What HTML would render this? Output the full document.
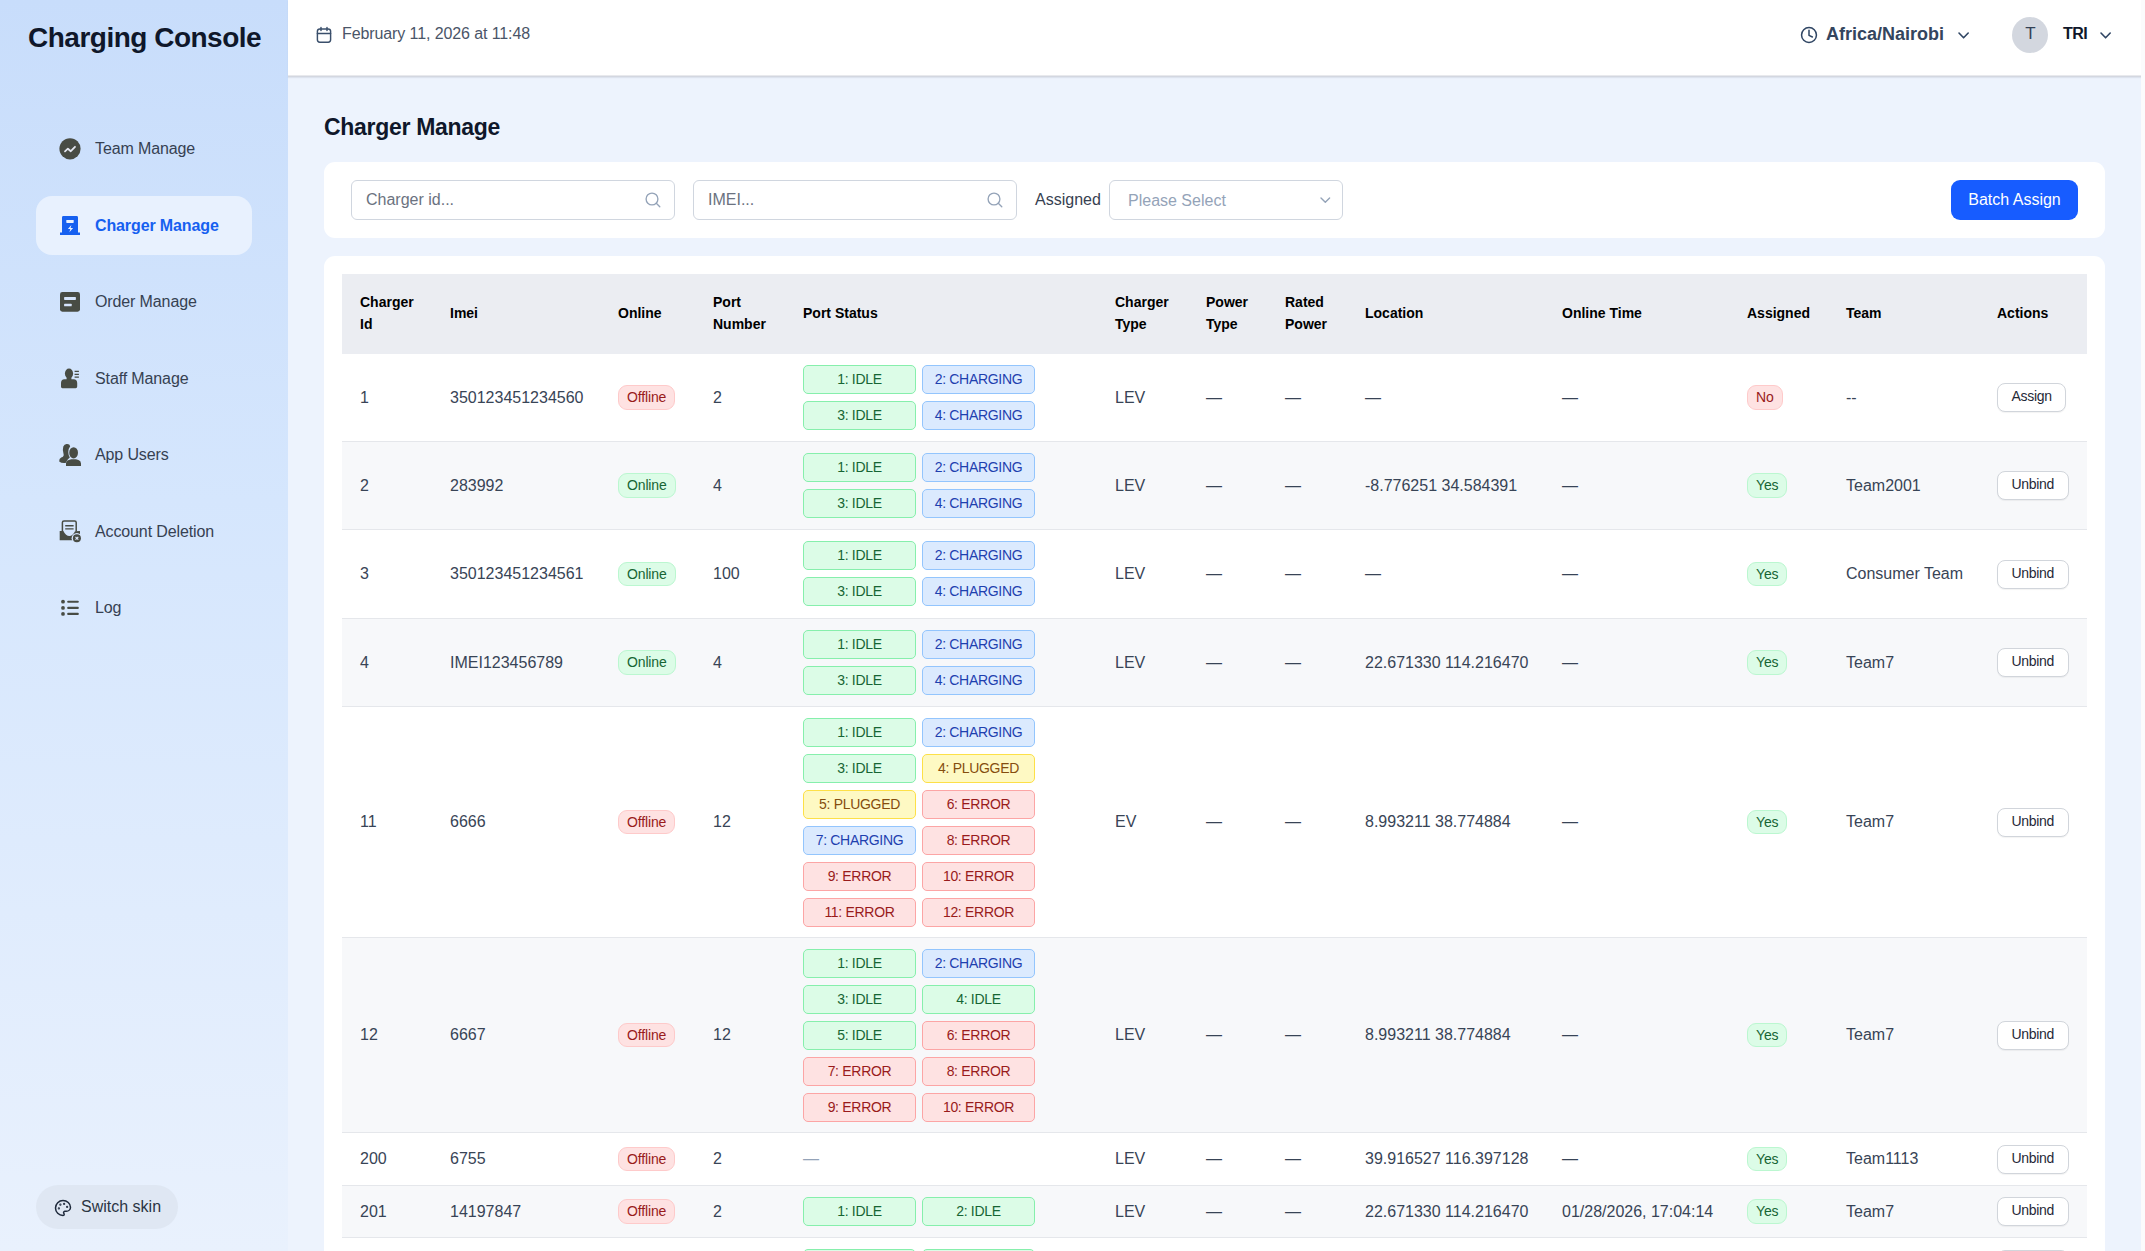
<!DOCTYPE html><html><head><meta charset="utf-8"><style>*{box-sizing:border-box;margin:0;padding:0}
html,body{width:2145px;height:1251px;overflow:hidden}
body{font-family:"Liberation Sans",sans-serif;background:#edf3fd;position:relative;color:#334155}
#sb{position:absolute;left:0;top:0;width:288px;height:1251px;background:linear-gradient(180deg,#c8ddfb 0%,#d5e6fd 40%,#e9f1fd 100%)}
#logo{position:absolute;z-index:1;left:28px;top:21px;font-size:28px;font-weight:700;letter-spacing:-0.5px;color:#0f172a;line-height:34px;white-space:nowrap}
.nav{position:absolute;left:36px;width:216px;height:59px;border-radius:16px}
.nav .ic{position:absolute;left:22px;top:17px;width:24px;height:24px}
.nav .ic svg{display:block}
.nav .tx{position:absolute;left:59px;top:0;line-height:59px;font-size:16px;color:#364152;white-space:nowrap;letter-spacing:-0.12px}
.nav.act{background:#e8f1fe}
.nav.act .tx{color:#1660f0;font-weight:700}
#skin{position:absolute;left:36px;top:1185px;width:142px;height:44px;border-radius:22px;background:#dfe7f3}
#skin .sic{position:absolute;left:19px;top:14px}
#skin .sic svg{display:block}
#skin .tx{position:absolute;left:45px;top:0;line-height:44px;font-size:16px;color:#2b3544}
#hdr{position:absolute;left:288px;top:0;width:1853px;height:77px;background:#fff;border-bottom:1px solid #d3d7e0;box-shadow:inset 0 -1px 0 #e8e9ed,0 1px 1px rgba(15,23,42,0.07)}
#sbar{position:absolute;left:2141px;top:0;width:4px;height:1251px;background:#fbfbfc}
.abs{position:absolute;white-space:nowrap}
.abs svg{display:block}
.pa{position:absolute;display:block;overflow:visible}
#date{left:342px;top:24px;font-size:16px;color:#4a5568;line-height:20px;letter-spacing:-0.1px}
#tz{left:1826px;top:23px;font-size:18px;font-weight:700;color:#34455e;line-height:22px}
#avatar{left:2012px;top:17px;width:36px;height:36px;border-radius:50%;background:#d3d7df;color:#334155;font-size:17px;text-align:center;line-height:34px;text-indent:1px}
#user{left:2063px;top:24px;font-size:16px;font-weight:700;color:#0f172a;line-height:20px;letter-spacing:-0.5px}
#title{left:324px;top:111.8px;font-size:23px;letter-spacing:-0.3px;font-weight:700;color:#0f172a;line-height:30px}
#fcard{position:absolute;left:324px;top:162px;width:1781px;height:76px;background:#fff;border-radius:11px}
.inp{position:absolute;top:180px;height:40px;border:1px solid #d0d6df;border-radius:6px;background:#fff}
.inp .ph{position:absolute;left:14px;top:0;line-height:38px;font-size:16px;color:#6b7280}
.inp .ph.sel{color:#94a3b8;left:18px;top:1px}
.inp .si{position:absolute;right:12px;top:10px}
.inp .si svg,.inp .chv svg{display:block}
.inp .chv{position:absolute;right:11px;top:12px}
#asl{left:1035px;top:190px;font-size:16px;color:#374151;line-height:20px}
#batch{left:1951px;top:180px;width:127px;height:40px;border-radius:9px;background:#175cff;color:#fff;font-size:16px;text-align:center;line-height:40px}
#tcard{position:absolute;left:324px;top:256px;width:1781px;height:1100px;background:#fff;border-radius:11px}
#tbl{position:absolute;left:342px;top:274px;width:1745px}
.row{display:grid;grid-template-columns:90px 168px 95px 90px 312px 91px 79px 80px 197px 185px 99px 151px 108px;border-bottom:1px solid #e5e7eb;align-items:center;font-size:16px;color:#384456;background:#fff}
.row>div{padding-left:18px;white-space:nowrap}
.head{height:80px;background:#ebedf2;border-bottom:none}
.head>div{font-size:14px;font-weight:700;color:#000;line-height:22px;white-space:normal;padding-right:8px;position:relative;top:-1px}
.row.g{background:#f7f8fa}
.pill{display:inline-block;height:24.5px;line-height:22.5px;padding:0 8px;letter-spacing:-0.15px;border-radius:9px;font-size:14px;border:1px solid;vertical-align:middle}
.off{background:#fee2e2;border-color:#fecaca;color:#991b1b}
.on{background:#dcfce7;border-color:#bbf7d0;color:#166534}
.ports{display:grid;grid-template-columns:113px 113px;column-gap:6px;row-gap:7px;margin-top:11px;margin-bottom:10px}
.row:not(.head)>div:nth-child(5){align-self:start}
.b{height:29px;line-height:27px;letter-spacing:-0.3px;border:1px solid;border-radius:5px;font-size:14px;text-align:center}
.I{background:#dcfce7;border-color:#86efac;color:#166534}
.C{background:#dbeafe;border-color:#93c5fd;color:#1e40af}
.P{background:#fef9c3;border-color:#fde047;color:#854d0e}
.E{background:#fee2e2;border-color:#fca5a5;color:#991b1b}
.btn{display:inline-block;height:29px;line-height:25.5px;padding:0 13.5px;border:1px solid #d1d5db;border-radius:8px;background:#fff;font-size:14px;color:#1f2937;letter-spacing:-0.3px;box-shadow:0 1px 1px rgba(0,0,0,0.05);vertical-align:middle}
.row:not(.head)>div.dash2{align-self:center;color:#94a3b8}
</style></head><body>
<div id="sb"></div><div id="logo">Charging Console</div>
<div class="nav" style="top:119px"><div class="tx">Team Manage</div></div>
<svg class="pa" style="left:56px;top:134px" width="28" height="28" viewBox="56 134 28 28"><circle cx="70" cy="148.8" r="10.6" fill="#484c44"/><path d="M65 151.3 L67.9 148.7 L70.8 151.2 L75 146.8" fill="none" stroke="#e3e6f0" stroke-width="1.8" stroke-linecap="round" stroke-linejoin="round"/></svg>
<div class="nav act" style="top:195.5px"><div class="tx">Charger Manage</div></div>
<svg class="pa" style="left:56px;top:210px" width="28" height="28" viewBox="56 210 28 28"><path d="M62 217.4 Q62 216 63.4 216 H76.6 Q78 216 78 217.4 V232.6 H80 V235 H60 V232.6 H62 Z" fill="#1660f0"/><rect x="66.3" y="220" width="7.4" height="2.9" rx="0.6" fill="#e8f1fe"/><path d="M71.4 224.9 L67.9 229.1 H70.3 L69.4 232.3 L73.1 227.9 H70.6 Z" fill="#e8f1fe"/></svg>
<div class="nav" style="top:272px"><div class="tx">Order Manage</div></div>
<svg class="pa" style="left:56px;top:288px" width="28" height="28" viewBox="56 288 28 28"><rect x="60" y="292" width="20" height="19.7" rx="2.4" fill="#484c44"/><rect x="64.1" y="297" width="11.8" height="2.9" rx="0.6" fill="#d5e4fb"/><rect x="64.1" y="303.7" width="7.6" height="2.6" rx="0.6" fill="#d5e4fb"/></svg>
<div class="nav" style="top:348.5px"><div class="tx">Staff Manage</div></div>
<svg class="pa" style="left:56px;top:364px" width="28" height="28" viewBox="56 364 28 28"><ellipse cx="69" cy="373.5" rx="4.1" ry="5.1" fill="#484c44"/><rect x="66.6" y="376" width="4.8" height="4" fill="#484c44"/><path d="M61 388 V383 Q61 379.2 64.5 379.2 H73.6 Q77.2 379.2 77.2 383 V386.6 Q77.2 388.2 75.6 388.2 H62.4 Q61 388.2 61 386.8 Z" fill="#484c44"/><path d="M74.6 371.4 H78.9 M74.6 374.3 H78.9 M74.6 377.2 H78.9" stroke="#484c44" stroke-width="1.3"/></svg>
<div class="nav" style="top:425px"><div class="tx">App Users</div></div>
<svg class="pa" style="left:56px;top:440px" width="28" height="28" viewBox="56 440 28 28"><path d="M66.5 444 Q69.6 443.6 70.2 446.2 Q68.3 448.5 68.3 452 Q68.3 455.5 69.8 457.6 Q67.6 459.2 66.8 461 L65.6 463 Q61.5 463.5 59.2 461.6 Q59 458.8 61.2 457.6 Q64.5 456.6 63.5 453.8 Q62.3 450 63.3 446.6 Q64.3 444.3 66.5 444 Z" fill="#484c44"/><ellipse cx="73.6" cy="452.8" rx="4.4" ry="5.6" fill="#484c44"/><path d="M66 466 V463.4 Q66 460.6 68.8 460 L71.2 459.2 H76 L78.4 460 Q81 460.8 81 463.4 V466 Z" fill="#484c44"/></svg>
<div class="nav" style="top:501.5px"><div class="tx">Account Deletion</div></div>
<svg class="pa" style="left:56px;top:516px" width="28" height="28" viewBox="56 516 28 28"><path d="M62.4 531.5 V522.6 Q62.4 521 64 521 H74.6 Q76.2 521 76.2 522.6 V531.5" fill="none" stroke="#484c44" stroke-width="1.5"/><path d="M65.2 525.7 H73.6 M65.2 528.9 H73.6" stroke="#484c44" stroke-width="1.4"/><path d="M59.7 530.9 H63.4 Q65.8 535.9 69.4 535.9 Q72.8 535.9 75 531.2 L80 530.9 V540.2 H59.7 Z" fill="#484c44"/><circle cx="76.9" cy="538.2" r="5.3" fill="#d5e5fc"/><circle cx="76.9" cy="538.2" r="4" fill="#484c44"/><path d="M75.5 536.8 L78.3 539.6 M78.3 536.8 L75.5 539.6" stroke="#dde8fb" stroke-width="1.2"/></svg>
<div class="nav" style="top:578px"><div class="tx">Log</div></div>
<svg class="pa" style="left:56px;top:594px" width="28" height="28" viewBox="56 594 28 28"><circle cx="63" cy="601.7" r="1.9" fill="#484c44"/><circle cx="63" cy="607.9" r="1.9" fill="#484c44"/><circle cx="63" cy="613.9" r="1.9" fill="#484c44"/><path d="M68.2 601.7 H77.8 M68.2 607.9 H77.8 M68.2 613.9 H77.8" stroke="#484c44" stroke-width="2.1" stroke-linecap="round"/></svg>
<div id="skin"><div class="tx">Switch skin</div></div>
<svg class="pa" style="left:54px;top:1199px" width="18" height="18" viewBox="0 0 24 24" fill="none" stroke="#1e293b" stroke-width="2" stroke-linecap="round" stroke-linejoin="round"><circle cx="13.5" cy="6.5" r=".5" fill="#1e293b"/><circle cx="17.5" cy="10.5" r=".5" fill="#1e293b"/><circle cx="8.5" cy="7.5" r=".5" fill="#1e293b"/><circle cx="6.5" cy="12.5" r=".5" fill="#1e293b"/><path d="M12 2C6.5 2 2 6.5 2 12s4.5 10 10 10c.926 0 1.648-.746 1.648-1.688 0-.437-.18-.835-.437-1.125-.29-.289-.438-.652-.438-1.125a1.64 1.64 0 0 1 1.668-1.668h1.996c3.051 0 5.555-2.503 5.555-5.554C21.965 6.012 17.461 2 12 2z"/></svg>
<div id="hdr"></div><div id="sbar"></div>
<svg class="pa" style="left:312px;top:22px" width="24" height="24" viewBox="312 22 24 24"><rect x="317.4" y="28.9" width="13.2" height="13.3" rx="2.4" fill="none" stroke="#3a4f6b" stroke-width="1.45"/><path d="M317.4 33.5 H330.6 M321 27.4 V30.4 M327 27.4 V30.4" stroke="#3a4f6b" stroke-width="1.45" stroke-linecap="round"/></svg>
<div class="abs" id="date">February 11, 2026 at 11:48</div>
<svg class="pa" style="left:1797px;top:23px" width="24" height="24" viewBox="1797 23 24 24"><circle cx="1809" cy="34.95" r="7.45" fill="none" stroke="#2f4563" stroke-width="1.5"/><path d="M1809 30.3 V35.3 L1812.4 37" fill="none" stroke="#2f4563" stroke-width="1.5" stroke-linecap="round" stroke-linejoin="round"/></svg>
<div class="abs" id="tz">Africa/Nairobi</div>
<svg class="pa" style="left:1956.6px;top:30.700000000000003px" width="13.2" height="8.8" viewBox="1956.6 30.700000000000003 13.2 8.8"><path d="M1958.6 32.7 L1963.1999999999998 37.5 L1967.8 32.7" fill="none" stroke="#2f4563" stroke-width="1.6" stroke-linecap="round" stroke-linejoin="round"/></svg>
<div class="abs" id="avatar">T</div>
<div class="abs" id="user">TRI</div>
<svg class="pa" style="left:2098.6px;top:30.700000000000003px" width="13.2" height="8.8" viewBox="2098.6 30.700000000000003 13.2 8.8"><path d="M2100.6 32.7 L2105.2 37.5 L2109.7999999999997 32.7" fill="none" stroke="#2f4563" stroke-width="1.6" stroke-linecap="round" stroke-linejoin="round"/></svg>
<div class="abs" id="title">Charger Manage</div>
<div id="fcard"></div>
<div class="inp" style="left:351px;width:324px"><div class="ph">Charger id...</div></div>
<svg class="pa" style="left:644.2px;top:191.1px" width="18" height="18" viewBox="644.2 191.1 18 18"><circle cx="652.2" cy="199.1" r="5.9" fill="none" stroke="#94a3b8" stroke-width="1.35"/><path d="M656.5 203.4 L660.0 206.9" stroke="#94a3b8" stroke-width="1.35" stroke-linecap="round"/></svg>
<div class="inp" style="left:693px;width:324px"><div class="ph">IMEI...</div></div>
<svg class="pa" style="left:986.2px;top:191.1px" width="18" height="18" viewBox="986.2 191.1 18 18"><circle cx="994.2" cy="199.1" r="5.9" fill="none" stroke="#94a3b8" stroke-width="1.35"/><path d="M998.5 203.4 L1002.0 206.9" stroke="#94a3b8" stroke-width="1.35" stroke-linecap="round"/></svg>
<div class="abs" id="asl">Assigned</div>
<div class="inp" style="left:1109px;width:234px"><div class="ph sel">Please Select</div></div>
<svg class="pa" style="left:1318.7px;top:195.9px" width="12.6" height="8.3" viewBox="1318.7 195.9 12.6 8.3"><path d="M1320.7 197.9 L1325.0 202.20000000000002 L1329.3 197.9" fill="none" stroke="#94a3b8" stroke-width="1.4" stroke-linecap="round" stroke-linejoin="round"/></svg>
<div class="abs" id="batch">Batch Assign</div>
<div id="tcard"></div>
<div id="tbl">
<div class="row head"><div>Charger Id</div><div>Imei</div><div>Online</div><div>Port Number</div><div>Port Status</div><div>Charger Type</div><div>Power Type</div><div>Rated Power</div><div>Location</div><div>Online Time</div><div>Assigned</div><div>Team</div><div>Actions</div></div>
<div class="row" style="height:88px"><div>1</div><div>350123451234560</div><div><span class="pill off">Offline</span></div><div>2</div><div><div class="ports"><div class="b I">1: IDLE</div><div class="b C">2: CHARGING</div><div class="b I">3: IDLE</div><div class="b C">4: CHARGING</div></div></div><div>LEV</div><div>—</div><div>—</div><div>—</div><div>—</div><div><span class="pill off">No</span></div><div>--</div><div><span class="btn">Assign</span></div></div>
<div class="row g" style="height:88px"><div>2</div><div>283992</div><div><span class="pill on">Online</span></div><div>4</div><div><div class="ports"><div class="b I">1: IDLE</div><div class="b C">2: CHARGING</div><div class="b I">3: IDLE</div><div class="b C">4: CHARGING</div></div></div><div>LEV</div><div>—</div><div>—</div><div>-8.776251 34.584391</div><div>—</div><div><span class="pill on">Yes</span></div><div>Team2001</div><div><span class="btn">Unbind</span></div></div>
<div class="row" style="height:89px"><div>3</div><div>350123451234561</div><div><span class="pill on">Online</span></div><div>100</div><div><div class="ports"><div class="b I">1: IDLE</div><div class="b C">2: CHARGING</div><div class="b I">3: IDLE</div><div class="b C">4: CHARGING</div></div></div><div>LEV</div><div>—</div><div>—</div><div>—</div><div>—</div><div><span class="pill on">Yes</span></div><div>Consumer Team</div><div><span class="btn">Unbind</span></div></div>
<div class="row g" style="height:88px"><div>4</div><div>IMEI123456789</div><div><span class="pill on">Online</span></div><div>4</div><div><div class="ports"><div class="b I">1: IDLE</div><div class="b C">2: CHARGING</div><div class="b I">3: IDLE</div><div class="b C">4: CHARGING</div></div></div><div>LEV</div><div>—</div><div>—</div><div>22.671330 114.216470</div><div>—</div><div><span class="pill on">Yes</span></div><div>Team7</div><div><span class="btn">Unbind</span></div></div>
<div class="row" style="height:231px"><div>11</div><div>6666</div><div><span class="pill off">Offline</span></div><div>12</div><div><div class="ports"><div class="b I">1: IDLE</div><div class="b C">2: CHARGING</div><div class="b I">3: IDLE</div><div class="b P">4: PLUGGED</div><div class="b P">5: PLUGGED</div><div class="b E">6: ERROR</div><div class="b C">7: CHARGING</div><div class="b E">8: ERROR</div><div class="b E">9: ERROR</div><div class="b E">10: ERROR</div><div class="b E">11: ERROR</div><div class="b E">12: ERROR</div></div></div><div>EV</div><div>—</div><div>—</div><div>8.993211 38.774884</div><div>—</div><div><span class="pill on">Yes</span></div><div>Team7</div><div><span class="btn">Unbind</span></div></div>
<div class="row g" style="height:195px"><div>12</div><div>6667</div><div><span class="pill off">Offline</span></div><div>12</div><div><div class="ports"><div class="b I">1: IDLE</div><div class="b C">2: CHARGING</div><div class="b I">3: IDLE</div><div class="b I">4: IDLE</div><div class="b I">5: IDLE</div><div class="b E">6: ERROR</div><div class="b E">7: ERROR</div><div class="b E">8: ERROR</div><div class="b E">9: ERROR</div><div class="b E">10: ERROR</div></div></div><div>LEV</div><div>—</div><div>—</div><div>8.993211 38.774884</div><div>—</div><div><span class="pill on">Yes</span></div><div>Team7</div><div><span class="btn">Unbind</span></div></div>
<div class="row" style="height:53px"><div>200</div><div>6755</div><div><span class="pill off">Offline</span></div><div>2</div><div class="dash2">—</div><div>LEV</div><div>—</div><div>—</div><div>39.916527 116.397128</div><div>—</div><div><span class="pill on">Yes</span></div><div>Team1113</div><div><span class="btn">Unbind</span></div></div>
<div class="row g" style="height:52px"><div>201</div><div>14197847</div><div><span class="pill off">Offline</span></div><div>2</div><div><div class="ports"><div class="b I">1: IDLE</div><div class="b I">2: IDLE</div></div></div><div>LEV</div><div>—</div><div>—</div><div>22.671330 114.216470</div><div>01/28/2026, 17:04:14</div><div><span class="pill on">Yes</span></div><div>Team7</div><div><span class="btn">Unbind</span></div></div>
<div class="row" style="height:53px"><div>202</div><div>14197848</div><div><span class="pill off">Offline</span></div><div>2</div><div><div class="ports"><div class="b I">1: IDLE</div><div class="b I">2: IDLE</div></div></div><div>LEV</div><div>—</div><div>—</div><div>—</div><div>—</div><div><span class="pill on">Yes</span></div><div>Team7</div><div><span class="btn">Unbind</span></div></div>
</div>
</body></html>
